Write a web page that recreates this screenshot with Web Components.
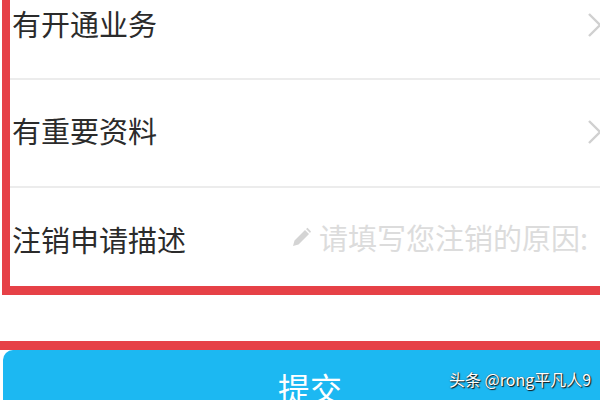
<!DOCTYPE html>
<html>
<head>
<meta charset="utf-8">
<style>
  html, body { margin: 0; padding: 0; background: #fff; }
  body { font-family: "Noto Sans CJK SC", "Liberation Sans", sans-serif; }
</style>
</head>
<body>
<cancel-page>
  <form-box>
    <form-row class="top" label="有开通业务" height="80" arrow></form-row>
    <form-row label="有重要资料" height="108" arrow></form-row>
    <form-row label="注销申请描述" height="98" placeholder="请填写您注销的原因:" last></form-row>
  </form-box>
  <submit-button>提交</submit-button>
</cancel-page>
<script>
class CancelPage extends HTMLElement {
    constructor() {
        super();
        this.attachShadow({mode: 'open'});
        this.shadowRoot.innerHTML = `
        <style>
            :host {
                display: flex;
                flex-direction: column;
                position: relative;
                width: 600px;
                height: 400px;
                overflow: hidden;
                background: #fff;
            }
            #mark {
                position: absolute;
                left: 449px;
                top: 368px;
                font-size: 16px;
                line-height: 22px;
                color: #fff;
                white-space: nowrap;
                text-shadow: 1px 1px 1px #111, 0 0 1px #444;
            }
        </style>
        <slot></slot>
        <div id="mark">头条 @rong平凡人9</div>
        `;
    }
}

class FormBox extends HTMLElement {
    constructor() {
        super();
        this.attachShadow({mode: 'open'});
        this.shadowRoot.innerHTML = `
        <style>
            :host {
                display: block;
                margin-left: 2px;
                border-left: 8px solid #e64147;
                border-bottom: 9px solid #e64147;
            }
        </style>
        <slot></slot>
        `;
    }
}

class FormRow extends HTMLElement {
    constructor() {
        super();
        this.attachShadow({mode: 'open'});
    }

    connectedCallback() {
        const placeholder = this.getAttribute('placeholder');
        const arrow = `
            <svg id="arrow" width="14" height="26" viewBox="0 0 14 26">
                <path d="M2 2 L13 13 L2 24" fill="none" stroke="#d0d0d0" stroke-width="2.4"/>
            </svg>`;
        const hint = `
            <span id="hint">
                <svg width="20" height="20" viewBox="0 0 20 20">
                    <path d="M1 19 L2.5 13.5 L13 3 L17 7 L6.5 17.5 Z M14 2 L15.5 0.8 L19 4.4 L18 6 Z" fill="#d4d4d4"/>
                </svg>
                <span>${placeholder}</span>
            </span>`;
        this.shadowRoot.innerHTML = `
        <style>
            :host {
                display: flex;
                box-sizing: border-box;
                align-items: center;
                justify-content: space-between;
                height: ${this.getAttribute('height')}px;
                padding-left: 2px;
                padding-bottom: 2px;
                border-bottom: 2px solid #ececec;
            }
            :host(.top) { padding-bottom: 28px; }
            :host([last]) { border-bottom: none; padding-top: 8px; padding-bottom: 0; }
            #label {
                padding-bottom: 5px;
                font-size: 29px;
                color: #2b2b2b;
                white-space: nowrap;
            }
            #arrow { flex: none; margin-right: -1px; }
            #hint {
                display: flex;
                align-items: center;
                gap: 7px;
                margin-right: 12px;
                padding-bottom: 8px;
                font-size: 29px;
                color: #dcdcdc;
                white-space: nowrap;
            }
        </style>
        <span id="label">${this.getAttribute('label')}</span>
        ${placeholder ? hint : arrow}
        `;
    }
}

class SubmitButton extends HTMLElement {
    constructor() {
        super();
        this.attachShadow({mode: 'open'});
        this.shadowRoot.innerHTML = `
        <style>
            :host {
                display: block;
                margin-top: 46px;
                border-top: 9px solid #e64147;
            }
            #btn {
                display: flex;
                justify-content: center;
                box-sizing: border-box;
                height: 90px;
                margin-left: 3px;
                margin-right: -6px;
                padding-top: 13px;
                padding-left: 11px;
                border-radius: 10px 0 0 0;
                background: #1cb8f2;
                color: #fff;
                font-size: 32px;
                line-height: 48px;
            }
        </style>
        <div id="btn"><slot></slot></div>
        `;
    }
}

customElements.define('cancel-page', CancelPage);
customElements.define('form-box', FormBox);
customElements.define('form-row', FormRow);
customElements.define('submit-button', SubmitButton);
</script>
</body>
</html>
